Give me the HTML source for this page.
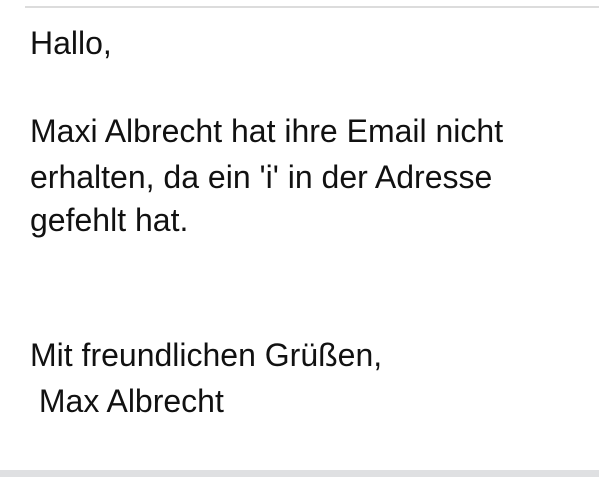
<!DOCTYPE html>
<html><head><meta charset="utf-8"><style>
body{margin:0;width:599px;height:477px;background:#fff;position:relative;overflow:hidden;font-family:"Liberation Sans",Arial,sans-serif;color:#111}
.l{position:absolute;left:30px;font-size:32px;line-height:36px;white-space:pre}
.top{position:absolute;left:25px;right:0;top:6px;height:2px;background:#dcdcdc}
.bot{position:absolute;left:0;right:0;top:470px;bottom:0;background:#dfe0e2}
</style></head><body>
<div class="top"></div>
<div class="l" style="top:25px">Hallo,</div>
<div class="l" style="top:113px">Maxi Albrecht hat ihre Email nicht</div>
<div class="l" style="top:159px">erhalten, da ein 'i' in der Adresse</div>
<div class="l" style="top:202px">gefehlt hat.</div>
<div class="l" style="top:337px">Mit freundlichen Grüßen,</div>
<div class="l" style="top:383px"> Max Albrecht</div>
<div class="bot"></div>
</body></html>
